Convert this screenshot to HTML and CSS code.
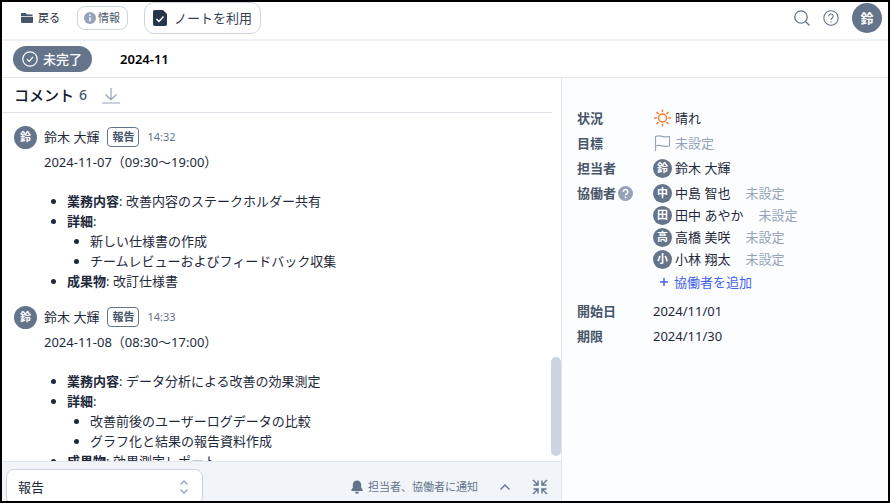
FILE: index.html
```html
<!doctype html>
<html lang="ja">
<head>
  <meta charset="UTF-8">
  <meta name="viewport" content="width=device-width, initial-scale=1.0">
  <title>2024-11</title>
  <link rel="stylesheet" href="styles.css">
</head>
<body>
  <div class="app">
    <header class="toolbar">
      <button type="button" class="back-button">
        <svg width="14" height="12" viewBox="0 0 14 12"><path d="M1 1h4.500l1.500 1.500h5.500v1.700H1zM1 5h12v5a1 1 0 0 1-1 1H2a1 1 0 0 1-1-1z" fill="#475569"/></svg>
        戻る
      </button>
      <button type="button" class="info-button">
        <svg width="12" height="12" viewBox="0 0 12 12"><circle cx="6" cy="6" r="6" fill="#94a3b8"/><path d="M6 5.200v4M6 2.600v1.300" stroke="#fff" stroke-width="1.500"/></svg>
        情報
      </button>
      <button type="button" class="note-button">
        <svg width="14" height="16" viewBox="0 0 14 16"><path d="M2 0h8l4 4v10a2 2 0 0 1-2 2H2a2 2 0 0 1-2-2V2a2 2 0 0 1 2-2z" fill="#28364b"/><path d="M3.500 9l2.500 2.500 4.500-5" fill="none" stroke="#fff" stroke-width="1.500"/></svg>
        ノートを利用
      </button>
      <div class="toolbar-right">
        <button type="button" class="icon-button" aria-label="検索">
          <svg width="16" height="16" viewBox="0 0 16 16" fill="none" stroke="#64748b" stroke-width="1.300"><circle cx="7" cy="7" r="6.200"/><path d="M11.500 11.500L15.500 15.500"/></svg>
        </button>
        <button type="button" class="icon-button" aria-label="ヘルプ">
          <svg width="16" height="16" viewBox="0 0 16 16" fill="none" stroke="#64748b" stroke-width="1.100"><circle cx="8" cy="8" r="7.200"/><path d="M5.800 6.200a2.200 2.200 0 1 1 3.400 1.800c-.8.500-1.200.9-1.200 1.900M8 11.200v1.300"/></svg>
        </button>
        <button type="button" class="avatar avatar-large">鈴</button>
      </div>
    </header>

    <div class="title-bar">
      <button type="button" class="status-button">
        <svg width="16" height="16" viewBox="0 0 16 16" fill="none" stroke="#fff" stroke-width="1.200"><circle cx="8" cy="8" r="7.200"/><path d="M5 8.200l2.200 2.200L11 6"/></svg>
        未完了
      </button>
      <h1>2024-11</h1>
    </div>

    <main class="main">
      <section class="comments">
        <div class="comments-header">
          <h2>コメント</h2>
          <span class="count">6</span>
          <button type="button" class="icon-button" aria-label="最新のコメントへ">
            <svg width="20" height="17" viewBox="0 0 20 17" fill="none" stroke="#94a3b8" stroke-width="1.200"><path d="M10 1v11.500M4.500 7.500l5.500 5.200 5.500-5.200M1 16h18"/></svg>
          </button>
        </div>

        <div class="comments-body">
          <div class="comment-list">
            <article class="comment">
              <div class="comment-meta">
                <span class="avatar">鈴</span>
                <span class="name">鈴木 大輝</span>
                <span class="tag">報告</span>
                <time>14:32</time>
              </div>
              <div class="comment-text">
                <p>2024-11-07（09:30～19:00）</p>
                <ul>
                  <li><strong>業務内容</strong>: 改善内容のステークホルダー共有</li>
                  <li><strong>詳細</strong>:
                    <ul>
                      <li>新しい仕様書の作成</li>
                      <li>チームレビューおよびフィードバック収集</li>
                    </ul>
                  </li>
                  <li><strong>成果物</strong>: 改訂仕様書</li>
                </ul>
              </div>
            </article>
            <article class="comment">
              <div class="comment-meta">
                <span class="avatar">鈴</span>
                <span class="name">鈴木 大輝</span>
                <span class="tag">報告</span>
                <time>14:33</time>
              </div>
              <div class="comment-text">
                <p>2024-11-08（08:30～17:00）</p>
                <ul>
                  <li><strong>業務内容</strong>: データ分析による改善の効果測定</li>
                  <li><strong>詳細</strong>:
                    <ul>
                      <li>改善前後のユーザーログデータの比較</li>
                      <li>グラフ化と結果の報告資料作成</li>
                    </ul>
                  </li>
                  <li><strong>成果物</strong>: 効果測定レポート</li>
                </ul>
              </div>
            </article>
          </div>
          <div class="scroll-track"><div class="scroll-thumb"></div></div>
        </div>

        <div class="composer">
          <div class="select-wrap">
            <select aria-label="コメントの種類">
              <option>報告</option>
            </select>
            <svg width="10" height="14" viewBox="0 0 10 14" fill="none" stroke="#94a3b8" stroke-width="1.300"><path d="M1.500 4.500L5 1l3.500 3.500M1.500 9.500L5 13l3.500-3.500"/></svg>
          </div>
          <div class="composer-tools">
            <button type="button" class="notify-button">
              <svg width="12" height="14" viewBox="0 0 12 14" fill="#64748b"><path d="M6 .5c-2.500 0-4.200 1.800-4.200 4.200v3L.4 9.600V11h11.200V9.600l-1.400-1.900v-3C10.200 2.300 8.500.5 6 .5zM4 11.700h4a2 2 0 0 1-4 0z"/></svg>
              担当者、協働者に通知
            </button>
            <button type="button" class="icon-button" aria-label="開く">
              <svg width="12" height="8" viewBox="0 0 12 8" fill="none" stroke="#64748b" stroke-width="1.400"><path d="M1.500 6.500L6 2l4.500 4.500"/></svg>
            </button>
            <button type="button" class="icon-button" aria-label="縮小">
              <svg width="16" height="16" viewBox="0 0 16 16" fill="none" stroke="#64748b" stroke-width="1.400"><path d="M1 1l4.500 4.500M6 1.500V6H1.500M15 1l-4.500 4.500M10 1.500V6h4.500M1 15l4.500-4.500M6 14.500V10H1.500M15 15l-4.500-4.500M10 14.500V10h4.500"/></svg>
            </button>
          </div>
        </div>
      </section>

      <aside class="details">
        <dl>
          <dt>状況</dt>
          <dd>
            <div class="person">
              <svg width="19" height="18" viewBox="0 0 18 18" fill="none" stroke="#f97b2c" stroke-width="1.500"><circle cx="9" cy="9" r="4"/><path d="M9 .5v2.800M9 14.700v2.800M.5 9h2.800M14.700 9h2.800M3 3l2 2M13 13l2 2M3 15l2-2M13 5l2-2"/></svg>
              晴れ
            </div>
          </dd>
          <dt>目標</dt>
          <dd>
            <div class="person unset">
              <svg width="19" height="18" viewBox="0 0 18 18" fill="none" stroke="#94a3b8" stroke-width="1.100"><path d="M2 17V2.500c5-2.200 8 1.800 14 0V12c-6 1.800-9-2.200-14 0"/></svg>
              未設定
            </div>
          </dd>
          <dt>担当者</dt>
          <dd>
            <div class="person"><span class="avatar avatar-small">鈴</span>鈴木 大輝</div>
          </dd>
          <dt>
            協働者
            <svg width="15" height="15" viewBox="0 0 15 15"><circle cx="7.500" cy="7.500" r="7.500" fill="#94a3b8"/><path d="M5.200 5.800a2.300 2.300 0 1 1 3.500 2c-.8.500-1.200.8-1.200 1.500M7.500 10.500v1.700" fill="none" stroke="#fff" stroke-width="1.500"/></svg>
          </dt>
          <dd>
            <div class="person"><span class="avatar avatar-small">中</span>中島 智也<span class="goal">未設定</span></div>
            <div class="person"><span class="avatar avatar-small">田</span>田中 あやか<span class="goal">未設定</span></div>
            <div class="person"><span class="avatar avatar-small">高</span>高橋 美咲<span class="goal">未設定</span></div>
            <div class="person"><span class="avatar avatar-small">小</span>小林 翔太<span class="goal">未設定</span></div>
            <button type="button" class="add-button">
              <svg width="8" height="8" viewBox="0 0 8 8"><path d="M4 0v8M0 4h8" stroke="#4361ee" stroke-width="1.500"/></svg>
              協働者を追加
            </button>
          </dd>
          <dt>開始日</dt>
          <dd>2024/11/01</dd>
          <dt>期限</dt>
          <dd>2024/11/30</dd>
        </dl>
      </aside>
    </main>
  </div>
</body>
</html>
```
FILE: styles.css
```css
* {
  box-sizing: border-box;
}
body {
  margin: 0;
  font-family: "Noto Sans", "Noto Sans CJK JP", sans-serif;
  font-size: 13px;
  line-height: 20px;
  color: #1e293b;
}
h1, h2, p, ul, dl, dd {
  margin: 0;
}
button, select {
  font: inherit;
  color: inherit;
  padding: 0;
  border: none;
  background: none;
  cursor: pointer;
}
button {
  display: flex;
  align-items: center;
  white-space: nowrap;
}
svg {
  display: block;
  flex: none;
}
.app {
  display: flex;
  flex-direction: column;
  height: 100vh;
  border: 2px solid #000;
  background-color: #fff;
  overflow: hidden;
}

/* header */
.toolbar {
  display: flex;
  align-items: center;
  flex: none;
  height: 39px;
  padding: 0 6px 5px 18px;
  border-bottom: 2px solid #eef2f7;
}
.back-button,
.info-button {
  gap: 4px;
  font-size: 11px;
  color: #475569;
}
.back-button {
  color: #1e293b;
}
.info-button {
  height: 24px;
  margin-left: 17px;
  padding: 0 7px 0 6px;
  gap: 2px;
  border: 1px solid #cbd5e1;
  border-radius: 8px;
}
.note-button {
  height: 32px;
  margin-left: 16px;
  padding: 0 8px;
  gap: 7px;
  border: 1px solid #cbd5e1;
  border-radius: 10px;
  color: #334155;
}
.toolbar-right {
  display: flex;
  align-items: center;
  gap: 13px;
  margin-left: auto;
}
.avatar {
  display: flex;
  align-items: center;
  justify-content: center;
  flex: none;
  width: 23px;
  height: 23px;
  border-radius: 50%;
  background-color: #64748b;
  color: #fff;
  font-size: 11px;
  font-weight: bold;
}
.avatar-large {
  width: 30px;
  height: 30px;
  font-size: 13px;
}
.avatar-small {
  width: 19px;
  height: 19px;
}
.title-bar {
  display: flex;
  align-items: center;
  flex: none;
  gap: 28px;
  height: 37px;
  padding: 0 11px;
  border-bottom: 1px solid #e2e5ea;
}
.status-button {
  height: 26px;
  padding: 0 10px 0 9px;
  gap: 5px;
  border-radius: 13px;
  background-color: #64748b;
  color: #fff;
  font-weight: 500;
}
h1 {
  font-size: 13px;
  font-weight: 600;
  color: #000;
}

/* comments */
.main {
  display: grid;
  grid-template-columns: minmax(0, 559fr) minmax(0, 327fr);
  grid-template-rows: minmax(0, 1fr);
  flex: 1;
  min-height: 0;
}
.comments {
  display: flex;
  flex-direction: column;
}
.comments-header {
  display: flex;
  align-items: center;
  flex: none;
  height: 35px;
  margin-right: 9px;
  padding-left: 12px;
  border-bottom: 1px solid #dde1e8;
}
h2 {
  font-size: 15px;
  font-weight: 500;
  color: #0f172a;
}
.count {
  margin: 0 14px 0 5px;
  font-size: 14px;
  font-weight: 500;
  color: #475569;
}
.comments-body {
  display: flex;
  flex: 1;
  min-height: 0;
}
.comment-list {
  flex: 1;
  min-width: 0;
  padding: 12px 0 0 12px;
  overflow: hidden;
}
.comment {
  margin-bottom: 14px;
}
.comment-meta {
  display: flex;
  align-items: center;
  height: 24px;
  margin-bottom: 3px;
}
.name {
  margin: 0 8px 0 7px;
}
.tag {
  padding: 0 4px;
  border: 1px solid #64748b;
  border-radius: 4px;
  color: #475569;
  font-size: 11px;
  line-height: 18px;
  font-weight: 600;
}
time {
  margin-left: 8px;
  font-size: 11px;
  color: #64748b;
}
.comment-text {
  padding-left: 30px;
}
.comment-text p {
  margin-bottom: 19px;
}
.comment-text ul {
  padding-left: 23px;
}
.comment-text ul ul {
  list-style: disc;
}
.scroll-track {
  display: flex;
  flex-direction: column;
  justify-content: flex-end;
  width: 10px;
  padding-bottom: 5px;
}
.scroll-thumb {
  height: 99px;
  border-radius: 5px;
  background-color: #cbd5e1;
}

/* bottom bar */
.composer {
  display: flex;
  flex: none;
  justify-content: space-between;
  height: 40px;
  padding: 7px 13px 0 4px;
  border-top: 1px solid #e2e5ea;
  background-color: #f1f5f9;
  overflow: hidden;
}
.select-wrap {
  display: flex;
  align-items: center;
  width: 197px;
  height: 36px;
  padding-right: 13px;
  border: 1px solid #cbd5e1;
  border-radius: 8px;
  background-color: #fff;
}
.select-wrap select {
  flex: 1;
  height: 34px;
  padding-left: 11px;
  appearance: none;
}
.composer-tools {
  display: flex;
  align-items: center;
  gap: 21px;
  height: 36px;
}
.notify-button {
  gap: 5px;
  font-size: 11px;
  color: #64748b;
}

/* details */
.details {
  padding: 29px 15px;
  border-left: 1px solid #e2e5ea;
  background-color: #fcfdfe;
}
dl {
  display: grid;
  grid-template-columns: 76px 1fr;
  row-gap: 3px;
}
dt {
  display: flex;
  align-items: center;
  height: 22px;
  gap: 2px;
  font-weight: 600;
  color: #475569;
}
dd {
  line-height: 22px;
}
.person {
  display: flex;
  align-items: center;
  height: 22px;
  gap: 3px;
}
.unset,
.goal {
  color: #94a3b8;
}
.goal {
  margin-left: 12px;
}
.add-button {
  height: 24px;
  margin-bottom: 3px;
  padding-left: 7px;
  gap: 6px;
  color: #4361ee;
}
```
